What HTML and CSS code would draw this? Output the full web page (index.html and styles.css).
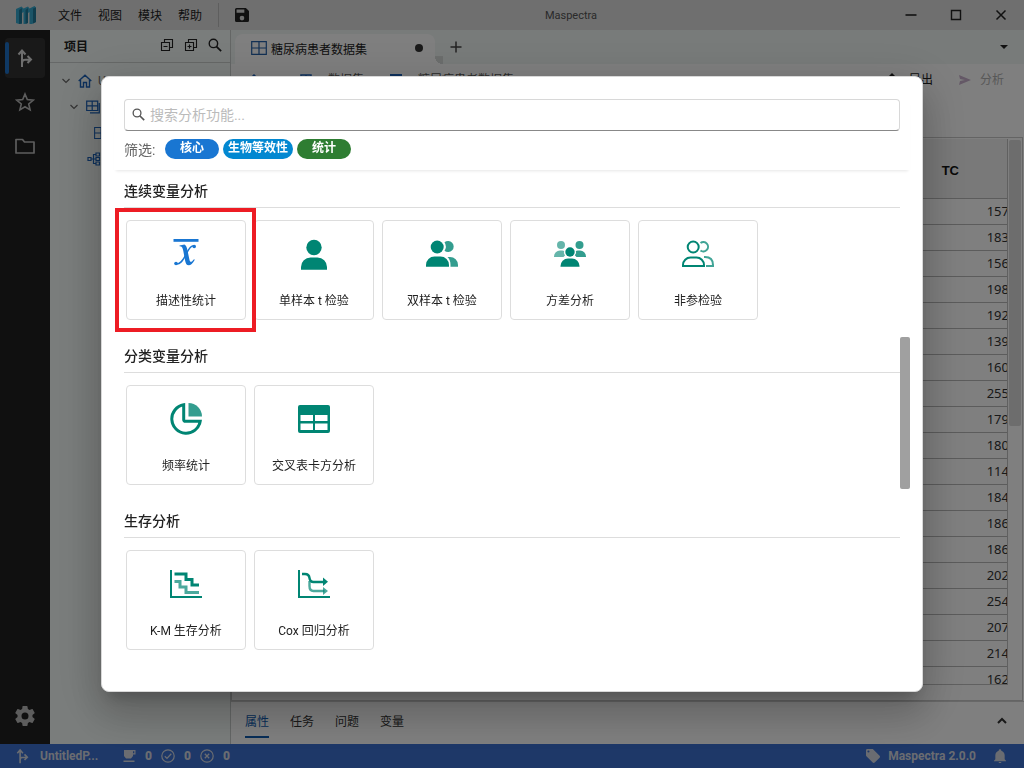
FILE: index.html
```html
<!DOCTYPE html>
<html lang="zh-CN">
<head>
<meta charset="utf-8">
<title>Maspectra</title>
<link rel="stylesheet" href="styles.css">
</head>
<body>
<svg class="defs" aria-hidden="true">
  <symbol id="branch" viewBox="0 0 16 20"><path d="M5 19V3M1.500 6.500L5 2.500l3.500 4M5 15.500c0-4 2-4 8-4M10.500 8l3.500 3.500L10.500 15" fill="none" stroke="currentColor" stroke-width="2"/></symbol>
  <symbol id="search" viewBox="0 0 16 16"><circle cx="6.200" cy="6.200" r="4.800" fill="none" stroke="currentColor" stroke-width="1.600"/><path d="M9.500 9.500l5.500 5.500" stroke="currentColor" stroke-width="2"/></symbol>
  <symbol id="grid" viewBox="0 0 16 14"><path d="M.7.700h14.600v12.600H.7zM8 1v12M1 7h14" fill="none" stroke="currentColor" stroke-width="1.200"/></symbol>
  <symbol id="chev" viewBox="0 0 8 6"><path d="M.5 1l3.500 3.500L7.500 1" fill="none" stroke="currentColor" stroke-width="1.200"/></symbol>
</svg>
<div class="app">
  <header class="titlebar">
    <svg class="logo" viewBox="0 0 20 18"><path d="M0 3L5.500.500l2 2L12 .500l1.500 2L18.500 0 20 1.500V16l-4 2h-2.500V6L12 7v10l-3.500 1H7.500V6L6 7v10.500L3 18l-3-1z" fill="#36a9cf"/><path d="M3 4l3-2v15.500L3 18zM9.500 4L12 2v15l-2.500 1zM17 2.500l3-1V16l-3 1.500z" fill="#217b9b"/></svg>
    <nav class="menu"><button>文件</button><button>视图</button><button>模块</button><button>帮助</button></nav>
    <button class="save" aria-label="保存"><svg viewBox="3 3 18 18"><path fill="currentColor" d="M15 9H5V5h10M12 19a3 3 0 1 1 0-6 3 3 0 0 1 0 6M17 3H5a2 2 0 0 0-2 2v14a2 2 0 0 0 2 2h14a2 2 0 0 0 2-2V7z"/></svg></button>
    <span class="apptitle">Maspectra</span>
    <div class="winctl">
      <button aria-label="最小化"><svg viewBox="0 0 12 12"><path d="M.5 6h11" stroke="currentColor" stroke-width="1.600"/></svg></button>
      <button aria-label="最大化"><svg viewBox="0 0 12 12"><path d="M1.500 1.500h9v9h-9z" fill="none" stroke="currentColor" stroke-width="1.400"/></svg></button>
      <button aria-label="关闭"><svg viewBox="0 0 12 12"><path d="M1.500 1.500l9 9M10.500 1.500l-9 9" stroke="currentColor" stroke-width="1.500"/></svg></button>
    </div>
  </header>
  <div class="body">
    <nav class="rail">
      <button class="on" aria-label="项目"><svg viewBox="0 0 16 20"><use href="#branch"/></svg></button>
      <button aria-label="收藏"><svg viewBox="0 0 20 20"><path d="M10 2l2.300 5.600 6 .5-4.600 3.900 1.400 5.900L10 14.700l-5.100 3.200 1.400-5.900-4.600-3.900 6-.5z" fill="none" stroke="currentColor" stroke-width="1.600"/></svg></button>
      <button aria-label="文件夹"><svg viewBox="0 0 20 20"><path d="M1 17V3.500h6.500l2 2.500H19v11z" fill="none" stroke="currentColor" stroke-width="1.700" stroke-linejoin="round"/></svg></button>
      <button class="gear" aria-label="设置"><svg viewBox="2 2 20 20"><path fill="currentColor" d="M12 15.500A3.500 3.500 0 0 1 8.500 12 3.500 3.500 0 0 1 12 8.500a3.500 3.500 0 0 1 3.500 3.500 3.500 3.500 0 0 1-3.500 3.500m7.430-2.530c.04-.32.07-.64.07-.97s-.03-.66-.07-1l2.110-1.630c.19-.15.24-.42.12-.64l-2-3.460c-.12-.22-.39-.31-.61-.22l-2.490 1c-.52-.39-1.060-.73-1.690-.98l-.37-2.650A.506.506 0 0 0 14 2h-4c-.25 0-.46.18-.5.42l-.37 2.650c-.63.25-1.170.59-1.690.98l-2.490-1c-.22-.09-.49 0-.61.22l-2 3.460c-.13.22-.07.49.12.64L4.570 11c-.04.34-.07.67-.07 1s.03.65.07.97l-2.110 1.660c-.19.15-.25.42-.12.64l2 3.460c.12.22.39.3.61.22l2.490-1.010c.52.400 1.060.740 1.690.990l.37 2.650c.04.240.25.420.5.420h4c.25 0 .46-.18.5-.42l.37-2.650c.63-.26 1.170-.59 1.690-.99l2.490 1.010c.22.080.49 0 .61-.22l2-3.460c.12-.22.070-.49-.12-.64z"/></svg></button>
    </nav>
    <aside class="project">
      <div class="phead"><h2>项目</h2>
        <button aria-label="全部折叠"><svg viewBox="0 0 14 14"><path d="M1.500 4.500h8v8h-8zM4.500 4V1.500h8v8H10M3.500 8.500h4" fill="none" stroke="currentColor" stroke-width="1.100"/></svg></button>
        <button aria-label="全部展开"><svg viewBox="0 0 14 14"><path d="M1.500 4.500h8v8h-8zM4.500 4V1.500h8v8H10M3.500 8.500h4M5.500 6.500v4" fill="none" stroke="currentColor" stroke-width="1.100"/></svg></button>
        <button aria-label="搜索"><svg viewBox="0 0 16 16"><use href="#search"/></svg></button>
      </div>
      <ul class="tree">
        <li class="l1"><svg class="chev" viewBox="0 0 8 6"><use href="#chev"/></svg><svg class="ti" viewBox="0 0 14 14"><path d="M.7 7L7 1.200 13.300 7M2.500 6v7h3V8.500h3V13h3V6" fill="none" stroke="currentColor" stroke-width="1.400"/></svg><span>U</span></li>
        <li class="l2"><svg class="chev" viewBox="0 0 8 6"><use href="#chev"/></svg><svg class="ti" viewBox="0 0 14 14"><path d="M.7 1.200h11v9.300H.7zM6.200 1v9.500M1 5.800h11M13.300 3v9.800H4" fill="none" stroke="currentColor" stroke-width="1.200"/></svg></li>
        <li class="l3"><svg class="ti" viewBox="0 0 16 14"><use href="#grid"/></svg></li>
        <li class="l4"><svg class="ti" viewBox="0 0 14 14"><path d="M1 5.500h3v3H1zM9 1h3.500v3H9zM9 5.500h3.500v3H9zM9 10h3.500v3H9zM4 7h5M6.500 7V2.500H9M6.500 7v4.500H9" fill="none" stroke="currentColor" stroke-width="1.200"/></svg></li>
      </ul>
    </aside>
    <main class="work">
      <div class="tabs">
        <div class="tab"><svg class="tg" viewBox="0 0 16 14"><use href="#grid"/></svg><span>糖尿病患者数据集</span><i class="dot"></i></div>
        <button class="plus" aria-label="新建"><svg viewBox="0 0 12 12"><path d="M6 .5v11M.5 6h11" stroke="currentColor" stroke-width="1.500"/></svg></button>
        <button class="more" aria-label="更多"><svg viewBox="0 0 8 4"><path d="M0 0h8L4 4z" fill="currentColor"/></svg></button>
      </div>
      <div class="toolbar">
        <svg class="up" viewBox="0 0 10 12"><path d="M5 12V1M1 5l4-4 4 4" fill="none" stroke="currentColor" stroke-width="1.500"/></svg>
        <svg class="bi" viewBox="0 0 12 12"><path d="M1 1h10v10H1zM6 1v10M1 6h10" fill="none" stroke="currentColor" stroke-width="1.500"/></svg><span class="c1">数据集</span>
        <svg class="bi" viewBox="0 0 12 12"><path d="M0 1h12v10H0z" fill="none" stroke="currentColor" stroke-width="2"/></svg><span class="c2">糖尿病患者数据集</span>
        <button class="export"><svg viewBox="0 0 12 14"><path d="M6 0l4 4H7v7H5V4H2z" fill="currentColor"/></svg>导出</button>
        <button class="run" disabled><svg viewBox="0 0 12 12"><path d="M0 1l12 5-12 5 1-4 5-1-5-1z" fill="currentColor"/></svg>分析</button>
      </div>
      <div class="gridbox">
        <div class="gridview">
          <table>
            <thead><tr><th>TC</th></tr></thead>
            <tbody>
              <tr><td>157</td></tr><tr><td>183</td></tr><tr><td>156</td></tr><tr><td>198</td></tr><tr><td>192</td></tr><tr><td>139</td></tr><tr><td>160</td></tr><tr><td>255</td></tr><tr><td>179</td></tr><tr><td>180</td></tr><tr><td>114</td></tr><tr><td>184</td></tr><tr><td>186</td></tr><tr><td>186</td></tr><tr><td>202</td></tr><tr><td>254</td></tr><tr><td>207</td></tr><tr><td>214</td></tr><tr><td>162</td></tr>
            </tbody>
          </table>
        </div>
        <div class="gridscroll"><div class="gridthumb"></div></div>
      </div>
      <div class="bottom">
        <button class="on">属性</button><button>任务</button><button>问题</button><button>变量</button>
        <button class="expand" aria-label="展开"><svg viewBox="0 0 10 7"><path d="M1 6l4-4 4 4" fill="none" stroke="currentColor" stroke-width="2"/></svg></button>
      </div>
    </main>
  </div>
  <footer class="status">
    <svg class="s1" viewBox="0 0 16 20"><use href="#branch"/></svg><span class="pname">UntitledP...</span>
    <svg class="s2" viewBox="0 0 14 14"><path d="M2 1h11.500v4.500H11V7l-2 2.500H4L2 7zM11 2.200v2h1.300v-2zM1.500 11.500h11V13h-11z" fill="currentColor" fill-rule="evenodd"/></svg><b>0</b>
    <svg class="s2" viewBox="0 0 14 14"><circle cx="7" cy="7" r="6.200" fill="none" stroke="currentColor" stroke-width="1.200"/><path d="M3.800 7.200l2.200 2.200 4.300-4.600" fill="none" stroke="currentColor" stroke-width="1.300"/></svg><b>0</b>
    <svg class="s2" viewBox="0 0 14 14"><circle cx="7" cy="7" r="6.200" fill="none" stroke="currentColor" stroke-width="1.200"/><path d="M4.800 4.800l4.400 4.400M9.200 4.800L4.800 9.200" stroke="currentColor" stroke-width="1.300"/></svg><b>0</b>
    <svg class="tag" viewBox="2 2 20 20"><path fill="currentColor" d="M5.500 7A1.500 1.500 0 0 1 4 5.500 1.500 1.500 0 0 1 5.500 4 1.500 1.500 0 0 1 7 5.500 1.500 1.500 0 0 1 5.500 7m15.910 4.580l-9-9C12.050 2.220 11.550 2 11 2H4a2 2 0 0 0-2 2v7c0 .550.220 1.050.590 1.410l8.990 9c.37.360.87.590 1.420.590s1.050-.23 1.410-.59l7-7c.37-.36.590-.86.590-1.410 0-.56-.23-1.060-.59-1.420z"/></svg>
    <span class="ver">Maspectra 2.0.0</span>
    <svg class="bell" viewBox="3 2 18 20"><path fill="currentColor" d="M21 19v1H3v-1l2-2v-6c0-3.100 2.030-5.830 5-6.710V4a2 2 0 1 1 4 0v.290c2.970.880 5 3.610 5 6.710v6zm-7 2a2 2 0 0 1-4 0z"/></svg>
  </footer>
</div>
<div class="backdrop">
  <div class="dialog" role="dialog" aria-label="分析">
    <div class="dhead">
      <label class="field"><svg viewBox="0 0 16 16"><use href="#search"/></svg><input type="text" placeholder="搜索分析功能..." aria-label="搜索分析功能"></label>
      <div class="filters"><span>筛选:</span><button class="core">核心</button><button class="bio">生物等效性</button><button class="stat">统计</button></div>
    </div>
    <div class="scroll">
      <section><h3>连续变量分析</h3>
        <div class="cards">
          <button class="card marked"><svg viewBox="0 0 32 32"><path d="M3.500 1h25v2.800h-25z" fill="#1976d2"/><path d="M9.500 7.500l5-1c1.800 1.200 2.400 3 3 6l2 9.500c.6 2.600 2 2.300 4.500-.8l.8.500c-2.200 3.800-4 5.500-6 5.500-2.200 0-3-1.500-3.600-4.300L13.300 13c-.6-3-1.200-4.800-3.800-4.700z" fill="#1976d2"/><path d="M25 8c-3.500-1-5.500 1.500-9 8.500-3.500 6.800-6 10-10 9.500" fill="none" stroke="#1976d2" stroke-width="1.500"/><circle cx="24.200" cy="8.500" r="1.800" fill="#1976d2"/><circle cx="6" cy="25.500" r="1.800" fill="#1976d2"/></svg><span>描述性统计</span></button>
          <button class="card"><svg viewBox="0 0 32 32"><circle cx="16" cy="9.500" r="7.700"/><path d="M3 31.800V29a9.500 9.500 0 0 1 9.500-9.500h7A9.500 9.500 0 0 1 29 29v2.800z"/></svg><span>单样本 t 检验</span></button>
          <button class="card"><svg viewBox="0 0 32 32"><g opacity=".8"><path d="M18.500 4.200a5.600 5.600 0 1 1 0 8.600 8 8 0 0 0 0-8.600zM21.500 19H24a8 8 0 0 1 8 8v1.800h-7.500V27c0-3.500-1-6-3-8z"/></g><circle cx="11.200" cy="9" r="6.500"/><path d="M0 28.800V27a8.500 8.500 0 0 1 8.500-8.500h6A8.500 8.500 0 0 1 23 27v1.800z"/></svg><span>双样本 t 检验</span></button>
          <button class="card"><svg viewBox="0 0 32 32"><g opacity=".6"><circle cx="7" cy="7" r="4"/><path d="M0 19v-.5a6 6 0 0 1 6-6h2.200a6 6 0 0 1 2 .5c-.7 2 0 3 1 4.300L9.500 19z"/></g><g opacity=".8"><circle cx="25.500" cy="7" r="4"/><path d="M32 19v-.5a6 6 0 0 0-6-6h-2.200a6 6 0 0 0-2 .5c.7 2 0 3-1 4.300l1.700 1.700z"/></g><circle cx="16" cy="14" r="4.700"/><path d="M6.500 28.800V28a7.500 7.500 0 0 1 7.500-7.500h4a7.500 7.500 0 0 1 7.500 7.500v.8z"/></svg><span>方差分析</span></button>
          <button class="card"><svg viewBox="0 0 32 32"><g fill="none" stroke="#008573" stroke-width="2"><g opacity=".75"><path d="M18.500 5a4.700 4.700 0 1 1 0 7.500M22 19h1c5 0 8 3 8 8v1h-7"/></g><circle cx="11.200" cy="9" r="5.500"/><path d="M1 28v-1a7.500 7.500 0 0 1 7.500-7.500h6A7.500 7.500 0 0 1 22 27v1z"/></g></svg><span>非参检验</span></button>
        </div>
      </section>
      <section><h3>分类变量分析</h3>
        <div class="cards">
          <button class="card"><svg viewBox="0 0 32 32"><path d="M18.500 0A13.500 13.500 0 0 1 32 13.500H18.500z" opacity=".8"/><path d="M13.700 1.800A14.300 14.300 0 1 0 30.200 18.300H15.300a1.600 1.600 0 0 1-1.600-1.600z" fill="none" stroke="#008573" stroke-width="3"/></svg><span>频率统计</span></button>
          <button class="card"><svg viewBox="0 0 32 32"><path fill-rule="evenodd" d="M2 2h28a2 2 0 0 1 2 2v24a2 2 0 0 1-2 2H2a2 2 0 0 1-2-2V4a2 2 0 0 1 2-2zM2.500 12v6H15v-6zM17 12v6h12.500v-6zM2.500 20.500V27h12.500v-6.500zM17 20.500V27h12.500v-6.500z"/></svg><span>交叉表卡方分析</span></button>
        </div>
      </section>
      <section><h3>生存分析</h3>
        <div class="cards">
          <button class="card"><svg viewBox="0 0 32 32"><g fill="none" stroke="#008573"><path d="M1 2v27h31" stroke-width="2"/><path d="M4.500 6H16v5.500h6V17h7" stroke-width="3"/><path d="M4.500 13.500H10V19h6v5.500h13" stroke-width="3" opacity=".7"/></g></svg><span>K-M 生存分析</span></button>
          <button class="card"><svg viewBox="0 0 32 32"><g fill="none" stroke="#008573"><path d="M1 2v27h31" stroke-width="2"/><path d="M11.500 13v5q0 5 4 5h11" stroke-width="2.400" opacity=".7"/><path d="M4 6h3q4 0 4.500 4t4 4h11" stroke-width="2.400"/></g><path d="M25 9.500l5 4.300-5 4.200z"/><path d="M25 19l5 4-5 4z" opacity=".7"/></svg><span>Cox 回归分析</span></button>
        </div>
      </section>
      <div class="thumb"></div>
    </div>
  </div>
</div>
</body>
</html>
```
FILE: styles.css
```css
* { box-sizing: border-box; }
html, body { height: 100%; margin: 0; overflow: hidden; }
body, button, input { font-family: Roboto, "Noto Sans CJK SC", sans-serif; font-size: 12px; }
button { border: 0; padding: 0; background: none; color: inherit; }
svg { display: block; flex: none; }
.defs { position: absolute; width: 0; height: 0; }

.app { height: 100vh; display: flex; flex-direction: column; background: #fff; color: #222; }

.titlebar { height: 30px; display: flex; align-items: center; background: #dedede; position: relative; color: #222; }
.logo { width: 20px; height: 18px; margin: 0 22px 0 16px; }
.menu { display: flex; gap: 16px; height: 24px; padding: 0 16px 2px 0; border-right: 1px solid #bcbcbc; }
.save { margin-left: 16px; }
.save svg { width: 14px; height: 14px; }
.apptitle { position: absolute; left: 0; right: 0; padding-right: 118px; padding-left: 236px; text-align: center; font-size: 11px; color: #555; pointer-events: none; }
.winctl { margin-left: auto; display: flex; padding-right: 1px; }
.winctl button { width: 45px; display: flex; justify-content: center; }
.winctl svg { width: 12px; height: 12px; }

.body { flex: 1; min-height: 0; display: flex; }
.rail { width: 50px; background: #202020; color: #bbb; display: flex; flex-direction: column; align-items: center; gap: 4px; padding: 8px 0; }
.rail button { position: relative; width: 40px; height: 40px; border-radius: 4px; display: flex; align-items: center; justify-content: center; }
.rail button.on { background: #333; color: #ddd; }
.rail .on::before { content: ""; position: absolute; left: 0; top: 4px; bottom: 4px; width: 4px; border-radius: 2px; background: #1f72c8; }
.rail svg { width: 20px; height: 20px; }
.rail .gear { margin-top: auto; }

.project { width: 181px; background: #f5faf8; border-right: 1px solid #c8cccb; overflow: hidden; }
.phead { height: 33px; padding: 0 8px 2px 14px; display: flex; align-items: center; gap: 10px; border-bottom: 1px solid #cdd1d0; }
.phead h2 { margin: 0 auto 0 0; font-size: 12px; font-weight: 700; }
.phead svg { width: 14px; height: 14px; }
.tree { list-style: none; margin: 0; padding: 5px 0; }
.tree li { height: 26px; display: flex; align-items: center; gap: 8px; white-space: nowrap; color: #666; }
.tree .l1 { padding-left: 12px; }
.tree .l2 { padding-left: 20px; }
.tree .l3 { padding-left: 44px; }
.tree .l4 { padding-left: 37px; }
.tree .l1 span { margin-left: -2px; }
.tree .chev { width: 8px; height: 6px; }
.tree .ti { width: 14px; height: 14px; color: #1c62b8; }

.work { flex: 1; min-width: 0; display: flex; flex-direction: column; }
.tabs { height: 34px; background: #f0f6f4; display: flex; align-items: center; padding: 0 16px 0 4px; }
.tab { position: relative; width: 200px; height: 30px; align-self: flex-end; background: #fff; border-radius: 8px 8px 0 0; display: flex; align-items: center; padding: 0 12px 2px 16px; }
.tab::after { content: ""; position: absolute; left: 100%; bottom: 0; width: 8px; height: 8px; background: radial-gradient(circle at 100% 0, #d8dcdb 8px, #fff 8px); }
.tab .tg { width: 16px; height: 14px; color: #2460a8; margin-right: 4px; }
.dot { width: 8px; height: 8px; border-radius: 50%; background: #333; margin-left: auto; }
.plus { margin-left: 15px; color: #444; }
.plus svg { width: 12px; height: 12px; }
.more { margin-left: auto; }
.more svg { width: 8px; height: 4px; }
.toolbar { height: 73px; display: flex; align-items: flex-start; padding: 6px 20px 0 18px; white-space: nowrap; line-height: 20px; color: #555; }
.toolbar > svg { margin-top: 4px; color: #1c62b8; }
.up { width: 10px; height: 12px; margin-right: 41px; }
.bi { width: 12px; height: 12px; margin-right: 16px; }
.toolbar .c1 { margin-right: 26px; }
.export, .run { display: flex; align-items: center; line-height: 20px; }
.export { margin-left: auto; gap: 11px; color: #222; }
.export svg { width: 12px; height: 14px; }
.run { margin-left: 26px; gap: 9px; color: #b0b0b0; }
.run svg { width: 12px; height: 12px; color: #c8b0cc; }

.gridbox { flex: 1; min-height: 0; display: flex; border: 1px solid #c8c8c8; margin: 0 1px 0 0; padding: 1px 0 15px; }
.gridview { flex: 1; min-width: 0; overflow: hidden; border-right: 1px solid #c0c0c0; border-bottom: 1px solid #c0c0c0; }
table { border-collapse: collapse; width: calc(100% + 2px); }
th { height: 59px; background: #f2f2f2; border-bottom: 1px solid #b8b8b8; text-align: right; padding: 5px 50px 0 0; font: bold 13px "Liberation Sans", Arial, sans-serif; color: #111; }
td { height: 26px; border-bottom: 1px solid #b8b8b8; text-align: right; padding: 0; font: 13px "Noto Sans", sans-serif; line-height: 20px; color: #333; }
.gridscroll { width: 14px; padding: 1px 0; display: flex; }
.gridthumb { width: 12px; height: 286px; background: #dadada; border-radius: 2px; margin-left: 1px; }

.bottom { height: 43px; display: flex; gap: 21px; padding: 4px 17px 6px 14px; border-top: 1px solid #d0d0d0; color: #333; }
.bottom button { border-bottom: 2px solid transparent; padding-bottom: 2px; }
.bottom .on { color: #0f5cb0; border-color: #0f5cb0; }
.bottom .expand { margin-left: auto; }
.expand svg { width: 10px; height: 7px; }

.status { height: 24px; background: #3c70d0; color: #d5d9e2; display: flex; align-items: center; font-weight: 700; padding: 0 18px 0 16px; }
.s1 { width: 13px; height: 16px; margin-right: 11px; }
.pname { width: 82px; }
.s2 { width: 14px; height: 14px; margin-right: 9px; }
.status b { width: 16px; }
.tag { width: 14px; height: 14px; margin: 0 8px 0 auto; }
.ver { margin-right: 18px; }
.bell { width: 12px; height: 14px; }

.backdrop { position: fixed; inset: 0; background: rgba(0, 0, 0, .5); display: flex; align-items: center; justify-content: center; }
.dialog { width: calc(80% + 3px); height: calc(80% + 2px); background: #fff; border: 1px solid #d8d8d8; border-radius: 8px; display: flex; flex-direction: column; padding: 22px 12px 10px; color: #222; box-shadow: 0 11px 15px -7px rgba(0,0,0,.2), 0 24px 38px 3px rgba(0,0,0,.14), 0 9px 46px 8px rgba(0,0,0,.12); }
.dhead { padding: 0 10px 11px; box-shadow: 0 3px 3px -2px rgba(0,0,0,.1); }
.field { height: 32px; display: flex; align-items: center; gap: 5px; padding: 0 7px; border: 1px solid #d8d8d8; border-bottom-color: #888; border-radius: 4px; color: #555; }
.field svg { width: 13px; height: 13px; }
.field input { flex: 1; border: 0; outline: 0; padding: 0; font-size: 14px; }
.field input::placeholder { color: #bbb; }
.filters { display: flex; align-items: center; gap: 4px; margin-top: 8px; height: 20px; }
.filters span { font-size: 14px; color: #666; width: 37px; }
.filters button { height: 20px; min-width: 54px; padding: 0 5px 2px; border-radius: 10px; color: #fff; font-weight: 700; line-height: 18px; }
.core { background: #1976d2; }
.bio { background: #0288d1; }
.stat { background: #2e7d32; }
.scroll { position: relative; flex: 1; min-height: 0; padding: 0 10px; }
section { padding-bottom: 15px; }
h3 { margin: 0 0 12px; height: 38px; line-height: 42px; border-bottom: 1px solid #ddd; font-size: 14px; font-weight: 500; }
.cards { display: flex; flex-wrap: wrap; gap: 8px; padding: 0 2px; }
.card { position: relative; width: 120px; height: 100px; border: 1px solid #ddd; border-radius: 4px; display: flex; flex-direction: column; align-items: center; padding: 17px 0 0; gap: 21px; background: #fff; }
.card svg { width: 32px; height: 32px; fill: #008573; }
.card span { line-height: 20px; }
.marked::after { content: ""; position: absolute; inset: -13px -11px -13px -12px; border: 4px solid #ed1c24; z-index: 1; }
.thumb { position: absolute; right: 0; top: 167px; width: 10px; height: 152px; background: #a0a0a0; border-radius: 2px; }
```
